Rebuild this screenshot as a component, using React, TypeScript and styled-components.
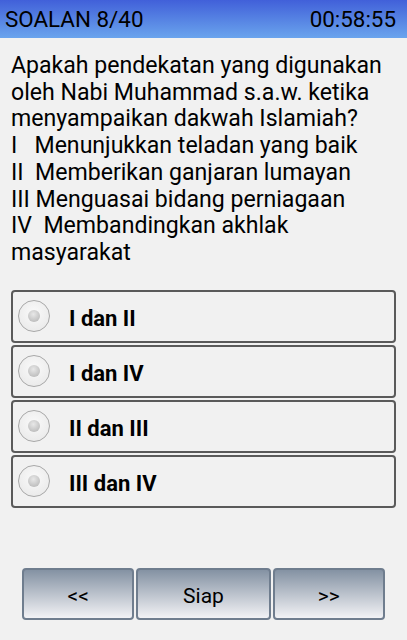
import React from "react";
import styled, { createGlobalStyle } from "styled-components";

const Global = createGlobalStyle`
  html, body { margin: 0; padding: 0; background: #f1f1f1; }
  body { font-family: Roboto, "Noto Sans", sans-serif; color: #000; }
`;

const Page = styled.div`
  width: 407px;
  height: 640px;
  display: flex;
  flex-direction: column;
  background: #f1f1f1;
  overflow: hidden;
`;

const Header = styled.div`
  height: 38px;
  display: flex;
  align-items: center;
  justify-content: space-between;
  padding: 0 11px 0 5px;
  background: linear-gradient(to bottom, #4160d9, #6aa4ed);
  font-size: 22.4px;
  color: #000;
`;

const Question = styled.div`
  padding: 15px 11px 0 11px;
  font-size: 23.1px;
  line-height: 26.7px;
  white-space: pre-wrap;
`;

const Options = styled.div`
  display: flex;
  flex-direction: column;
  gap: 2px;
  margin: 23px 11px 0 11px;
`;

const Option = styled.div`
  height: 49px;
  border: 2px solid #5a5a5a;
  border-radius: 4px;
  display: flex;
  align-items: center;
  padding-left: 5px;
  gap: 19px;
`;

const Radio = styled.div`
  width: 32px;
  height: 32px;
  border-radius: 50%;
  border: 1.5px solid #a8a8a8;
  background: radial-gradient(circle at 50% 40%, #fafafa, #e6e6e6);
  display: flex;
  align-items: center;
  justify-content: center;
  box-sizing: border-box;
`;

const Dot = styled.div`
  width: 12px;
  height: 12px;
  border-radius: 50%;
  background: radial-gradient(circle at 45% 35%, #e8e8e8, #b0b0b0);
`;

const OptionLabel = styled.span`
  font-weight: bold;
  font-size: 22px;
  padding-top: 4px;
`;

const Spacer = styled.div`
  flex: 1;
`;

const ButtonBar = styled.div`
  display: flex;
  gap: 2px;
  padding: 0 22px;
  margin-bottom: 20px;
`;

const NavButton = styled.div<{ $w: number }>`
  width: ${(p) => p.$w}px;
  height: 52px;
  box-sizing: border-box;
  border: 2px solid #6f7d8e;
  border-radius: 4px;
  background: linear-gradient(to bottom, #8492a3, #f2f2f5);
  display: flex;
  align-items: center;
  justify-content: center;
  padding-top: 4px;
  font-size: 21px;
`;

const questionText =
  "Apakah pendekatan yang digunakan\noleh Nabi Muhammad s.a.w. ketika\nmenyampaikan dakwah Islamiah?\nI   Menunjukkan teladan yang baik\nII  Memberikan ganjaran lumayan\nIII Menguasai bidang perniagaan\nIV  Membandingkan akhlak\nmasyarakat";

const options = ["I dan II", "I dan IV", "II dan III", "III dan IV"];

export default function App() {
  return (
    <Page>
      <Global />
      <Header>
        <span>SOALAN 8/40</span>
        <span>00:58:55</span>
      </Header>
      <Question>{questionText}</Question>
      <Options>
        {options.map((o) => (
          <Option key={o}>
            <Radio>
              <Dot />
            </Radio>
            <OptionLabel>{o}</OptionLabel>
          </Option>
        ))}
      </Options>
      <Spacer />
      <ButtonBar>
        <NavButton $w={113}>&lt;&lt;</NavButton>
        <NavButton $w={135}>Siap</NavButton>
        <NavButton $w={113}>&gt;&gt;</NavButton>
      </ButtonBar>
    </Page>
  );
}
